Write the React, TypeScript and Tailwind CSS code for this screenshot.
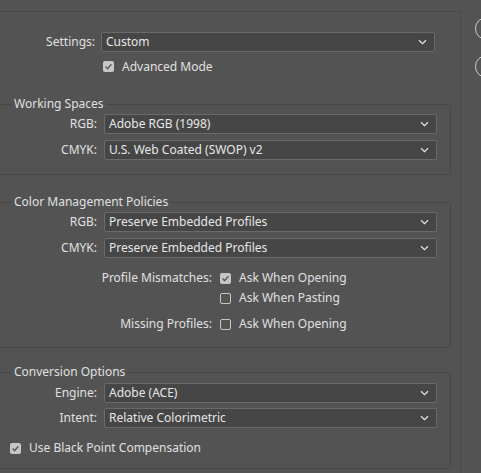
import React from "react";

const font = { fontFamily: '"Noto Sans", "Open Sans", sans-serif' };

function Chevron() {
  return (
    <svg width="9" height="6" viewBox="0 0 9 6" className="shrink-0">
      <path d="M1 1.2 L4.5 4.6 L8 1.2" fill="none" stroke="#e6e6e6" strokeWidth="1.2" />
    </svg>
  );
}

function Select({ value, width = "w-[333px]" }: { value: string; width?: string }) {
  return (
    <div
      className={`${width} h-[20px] flex items-center justify-between pl-[4px] pr-[7px] bg-[#464646] border border-[#6a6a6a] rounded-[2px] text-[#e6e6e6]`}
    >
      <span className="leading-none">{value}</span>
      <Chevron />
    </div>
  );
}

function Checkbox({ checked }: { checked?: boolean }) {
  return checked ? (
    <div className="w-[11px] h-[11px] rounded-[2px] bg-[#c6c6c6] flex items-center justify-center shrink-0">
      <svg width="9" height="9" viewBox="0 0 9 9">
        <path d="M1.6 4.6 L3.6 6.6 L7.4 2.2" fill="none" stroke="#5a5a5a" strokeWidth="1.4" />
      </svg>
    </div>
  ) : (
    <div className="w-[11px] h-[11px] rounded-[2px] border border-[#c6c6c6] shrink-0" />
  );
}

function Row({ label, value, className = "" }: { label: string; value: string; className?: string }) {
  return (
    <div className={`flex items-center gap-[7px] ${className}`}>
      <span className="w-[101px] text-right text-[#e0e0e0]">{label}</span>
      <Select value={value} />
    </div>
  );
}

function Group({ title, children, className = "" }: { title: string; children: React.ReactNode; className?: string }) {
  return (
    <fieldset className={`-ml-[5px] w-[456px] border border-[#474747] rounded-[3px] ${className}`}>
      <legend className="ml-[15px] px-[3px] text-[#e0e0e0] leading-[16px]">{title}</legend>
      {children}
    </fieldset>
  );
}

export default function App() {
  return (
    <div className="flex w-[481px] h-[473px] bg-[#535353] overflow-hidden text-[12px]" style={font}>
      <div className="w-[461px] shrink-0 mt-[11px] border-t border-r border-[#4a4a4a]">
        <div className="flex items-center gap-[6px] mt-[20px]">
          <span className="w-[95px] text-right text-[#e0e0e0]">Settings:</span>
          <Select value="Custom" width="w-[334px]" />
        </div>
        <div className="flex items-center gap-[8px] pl-[103px] mt-[7px] h-[15px]">
          <Checkbox checked />
          <span className="text-[#e0e0e0]">Advanced Mode</span>
        </div>

        <Group title="Working Spaces" className="mt-[22px] pb-[14px]">
          <Row label="RGB:" value="Adobe RGB (1998)" className="mt-[2px]" />
          <Row label="CMYK:" value="U.S. Web Coated (SWOP) v2" className="mt-[6px]" />
        </Group>

        <Group title="Color Management Policies" className="mt-[19px] pb-[15px]">
          <Row label="RGB:" value="Preserve Embedded Profiles" className="mt-[2px]" />
          <Row label="CMYK:" value="Preserve Embedded Profiles" className="mt-[6px]" />
          <div className="flex items-center gap-[8px] mt-[12px] h-[16px]">
            <span className="w-[216px] text-right text-[#e0e0e0]">Profile Mismatches:</span>
            <Checkbox checked />
            <span className="text-[#e0e0e0]">Ask When Opening</span>
          </div>
          <div className="flex items-center gap-[8px] pl-[224px] mt-[4px] h-[16px]">
            <Checkbox />
            <span className="text-[#e0e0e0]">Ask When Pasting</span>
          </div>
          <div className="flex items-center gap-[8px] mt-[10px] h-[16px]">
            <span className="w-[216px] text-right text-[#e0e0e0]">Missing Profiles:</span>
            <Checkbox />
            <span className="text-[#e0e0e0]">Ask When Opening</span>
          </div>
        </Group>

        <Group title="Conversion Options" className="mt-[16px] pb-[12px]">
          <Row label="Engine:" value="Adobe (ACE)" className="mt-[3px]" />
          <Row label="Intent:" value="Relative Colorimetric" className="mt-[5px]" />
          <div className="flex items-center gap-[8px] pl-[14px] mt-[12px] h-[16px]">
            <Checkbox checked />
            <span className="text-[#e0e0e0]">Use Black Point Compensation</span>
          </div>
        </Group>
      </div>
      <div className="flex-1 flex flex-col gap-[15px] pl-[14px] pt-[17px]">
        <div className="w-[80px] h-[23px] shrink-0 rounded-full border border-[#cfcfcf]" />
        <div className="w-[80px] h-[23px] shrink-0 rounded-full border border-[#cfcfcf]" />
      </div>
    </div>
  );
}
